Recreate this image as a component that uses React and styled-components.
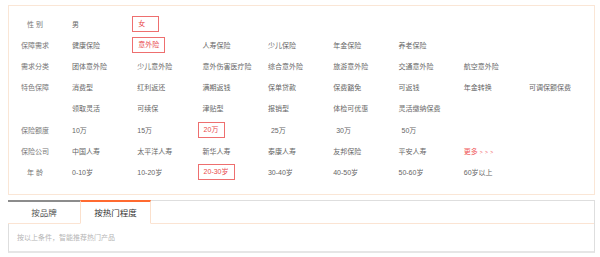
import styled, { createGlobalStyle } from "styled-components";

const GlobalStyle = createGlobalStyle`
  html, body {
    margin: 0;
    padding: 0;
    background: #fff;
  }
  body {
    font-family: "Liberation Sans", "Noto Sans CJK SC", sans-serif;
  }
`;

const rows = [
  { label: "性 别", items: ["男", "女"], selected: 1 },
  {
    label: "保障需求",
    items: ["健康保险", "意外险", "人寿保险", "少儿保险", "年金保险", "养老保险"],
    selected: 1,
  },
  {
    label: "需求分类",
    items: ["团体意外险", "少儿意外险", "意外伤害医疗险", "综合意外险", "旅游意外险", "交通意外险", "航空意外险"],
  },
  {
    label: "特色保障",
    items: [
      "消费型", "红利返还", "满期返钱", "保单贷款", "保费豁免", "可返钱", "年金转换", "可调保额保费",
      "领取灵活", "可续保", "津贴型", "报销型", "体检可优惠", "灵活缴纳保费",
    ],
  },
  {
    label: "保险额度",
    items: ["10万", "15万", "20万", "25万", "30万", "50万"],
    selected: 2,
    indentFrom: 3,
  },
  {
    label: "保险公司",
    items: ["中国人寿", "太平洋人寿", "新华人寿", "泰康人寿", "友邦保险", "平安人寿"],
    more: true,
  },
  {
    label: "年 龄",
    items: ["0-10岁", "10-20岁", "20-30岁", "30-40岁", "40-50岁", "50-60岁", "60岁以上"],
    selected: 2,
  },
];

const App = () => {
  return (
    <Page>
      <GlobalStyle />
      <FilterPanel>
        {rows.map((row) => (
          <FilterRow key={row.label}>
            <RowLabel>{row.label}</RowLabel>
            <Options>
              {row.items.map((item, i) => (
                <Option key={item} $indent={row.indentFrom !== undefined && i >= row.indentFrom}>
                  {row.selected === i ? <Selected>{item}</Selected> : item}
                </Option>
              ))}
              {row.more && (
                <Option>
                  <More>
                    更多 <Arrows>&gt; &gt; &gt;</Arrows>
                  </More>
                </Option>
              )}
            </Options>
          </FilterRow>
        ))}
      </FilterPanel>

      <SortBox>
        <TabBar>
          <Tab>按品牌</Tab>
          <Tab $active>按热门程度</Tab>
          <TabFill />
        </TabBar>
        <SortHint>按以上条件，智能推荐热门产品</SortHint>
      </SortBox>
    </Page>
  );
};

export default App;

const Page = styled.div`
  padding: 5px 0 0 8px;
  width: 587px;
`;

const FilterPanel = styled.div`
  box-sizing: border-box;
  width: 587px;
  border: 1px solid #fae6d6;
  padding: 7px 0 11px;
`;

const FilterRow = styled.div`
  display: grid;
  grid-template-columns: 63px 1fr;
  align-items: start;
`;

const RowLabel = styled.div`
  width: 52px;
  height: 21.2px;
  display: flex;
  align-items: center;
  justify-content: center;
  font-size: 7px;
  color: #777;
  white-space: pre;
`;

const Options = styled.div`
  display: flex;
  flex-wrap: wrap;
  width: 530px;
`;

const Option = styled.div`
  width: 65.3px;
  height: 21.2px;
  display: flex;
  align-items: center;
  font-size: 7px;
  color: #666;
  padding-left: ${({ $indent }) => ($indent ? "3px" : "0")};
  box-sizing: border-box;
  white-space: nowrap;
`;

const Selected = styled.span`
  display: inline-block;
  box-sizing: border-box;
  min-width: 27px;
  height: 16px;
  line-height: 14px;
  padding: 0 5px;
  margin-left: -5px;
  border: 1px solid #ee6f6f;
  color: #e9484b;
`;

const More = styled.span`
  color: #f0575a;
`;

const Arrows = styled.span`
  font-size: 5px;
  letter-spacing: 0.5px;
`;

const SortBox = styled.div`
  box-sizing: border-box;
  margin-top: 5px;
  width: 587px;
  border: 1px solid #dedede;
  border-bottom: 2px solid #e6e6e6;
  border-top: none;
`;

const TabBar = styled.div`
  display: flex;
  height: 24px;
`;

const Tab = styled.div`
  box-sizing: border-box;
  width: ${({ $active }) => ($active ? "71px" : "72px")};
  margin-left: ${({ $active }) => ($active ? "0" : "-1px")};
  display: flex;
  align-items: center;
  justify-content: center;
  font-size: 8.5px;
  color: ${({ $active }) => ($active ? "#333" : "#555")};
  border-top: 2px solid ${({ $active }) => ($active ? "#ff6a30" : "#8c8c8c")};
  border-bottom: 1px solid ${({ $active }) => ($active ? "transparent" : "#fbe4d3")};
  border-left: ${({ $active }) => ($active ? "1px solid #fbe0cc" : "none")};
  border-right: ${({ $active }) => ($active ? "1px solid #fbe0cc" : "none")};
  background: #fff;
`;

const TabFill = styled.div`
  flex: 1;
  border-top: 1px solid #dedede;
  border-bottom: 1px solid #fbe4d3;
`;

const SortHint = styled.div`
  height: 27px;
  display: flex;
  align-items: center;
  padding-left: 8px;
  font-size: 7px;
  color: #b5b5b5;
`;
